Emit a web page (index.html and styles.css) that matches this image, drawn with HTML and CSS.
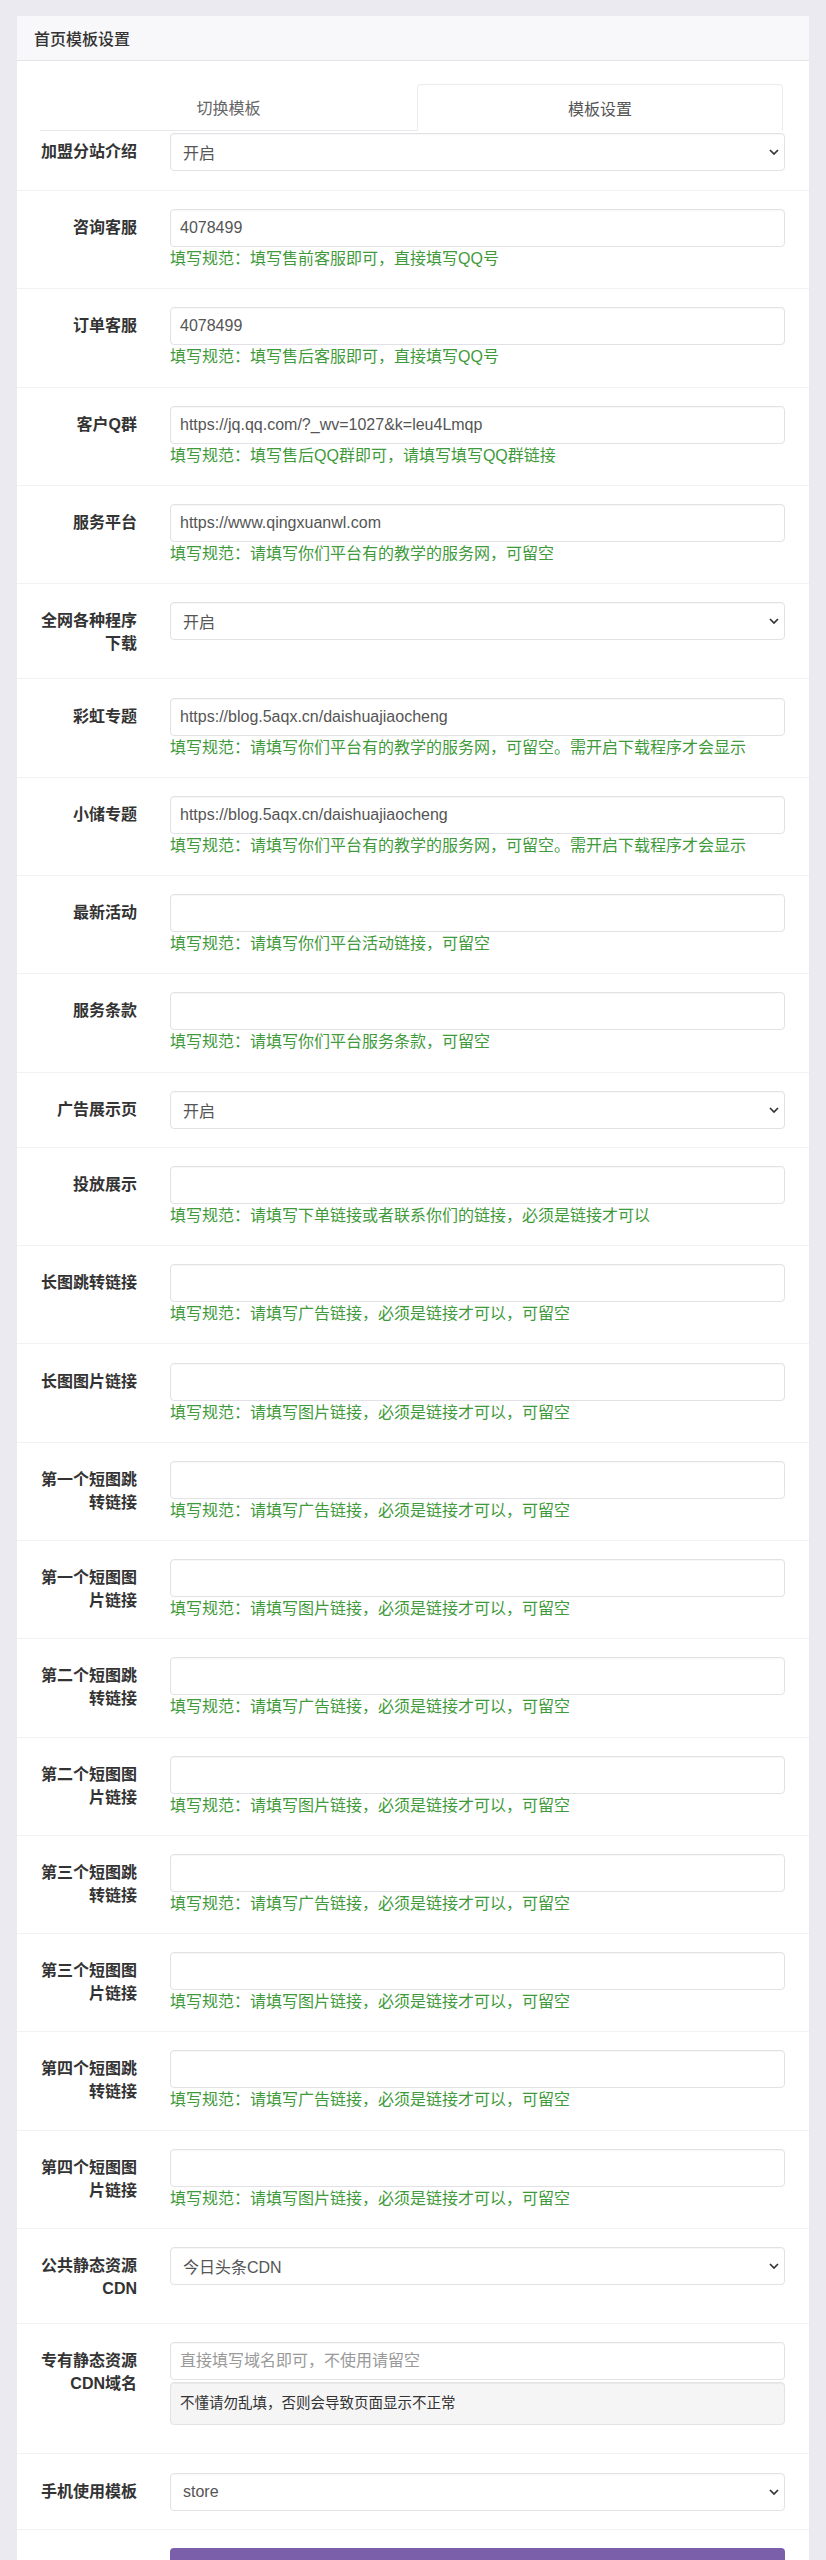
FILE: index.html
```html
<!DOCTYPE html>
<html lang="zh-CN">
<head>
<meta charset="utf-8">
<title>首页模板设置</title>
<link rel="stylesheet" href="styles.css">
</head>
<body>
<div class="page">
  <div class="card">
    <div class="card-head">首页模板设置</div>
    <div class="card-body">
      <div class="tabs">
        <div class="tab">切换模板</div>
        <div class="tab active">模板设置</div>
      </div>

      <div class="row first">
        <label class="lbl">加盟分站介绍</label>
        <div class="field"><div class="sel"><span>开启</span><svg class="chev" width="10" height="6" viewBox="0 0 10 6"><path d="M1 1l4 4 4-4" fill="none" stroke="#333" stroke-width="1.7"/></svg></div></div>
      </div>

      <div class="row">
        <label class="lbl">咨询客服</label>
        <div class="field"><input class="ctl" value="4078499"><div class="help">填写规范：填写售前客服即可，直接填写QQ号</div></div>
      </div>

      <div class="row">
        <label class="lbl">订单客服</label>
        <div class="field"><input class="ctl" value="4078499"><div class="help">填写规范：填写售后客服即可，直接填写QQ号</div></div>
      </div>

      <div class="row">
        <label class="lbl">客户Q群</label>
        <div class="field"><input class="ctl" value="https://jq.qq.com/?_wv=1027&amp;k=leu4Lmqp"><div class="help">填写规范：填写售后QQ群即可，请填写填写QQ群链接</div></div>
      </div>

      <div class="row">
        <label class="lbl">服务平台</label>
        <div class="field"><input class="ctl" value="https://www.qingxuanwl.com"><div class="help">填写规范：请填写你们平台有的教学的服务网，可留空</div></div>
      </div>

      <div class="row">
        <label class="lbl">全网各种程序下载</label>
        <div class="field"><div class="sel"><span>开启</span><svg class="chev" width="10" height="6" viewBox="0 0 10 6"><path d="M1 1l4 4 4-4" fill="none" stroke="#333" stroke-width="1.7"/></svg></div></div>
      </div>

      <div class="row">
        <label class="lbl">彩虹专题</label>
        <div class="field"><input class="ctl" value="https://blog.5aqx.cn/daishuajiaocheng"><div class="help">填写规范：请填写你们平台有的教学的服务网，可留空。需开启下载程序才会显示</div></div>
      </div>

      <div class="row">
        <label class="lbl">小储专题</label>
        <div class="field"><input class="ctl" value="https://blog.5aqx.cn/daishuajiaocheng"><div class="help">填写规范：请填写你们平台有的教学的服务网，可留空。需开启下载程序才会显示</div></div>
      </div>

      <div class="row">
        <label class="lbl">最新活动</label>
        <div class="field"><input class="ctl" value=""><div class="help">填写规范：请填写你们平台活动链接，可留空</div></div>
      </div>

      <div class="row">
        <label class="lbl">服务条款</label>
        <div class="field"><input class="ctl" value=""><div class="help">填写规范：请填写你们平台服务条款，可留空</div></div>
      </div>

      <div class="row">
        <label class="lbl">广告展示页</label>
        <div class="field"><div class="sel"><span>开启</span><svg class="chev" width="10" height="6" viewBox="0 0 10 6"><path d="M1 1l4 4 4-4" fill="none" stroke="#333" stroke-width="1.7"/></svg></div></div>
      </div>

      <div class="row">
        <label class="lbl">投放展示</label>
        <div class="field"><input class="ctl" value=""><div class="help">填写规范：请填写下单链接或者联系你们的链接，必须是链接才可以</div></div>
      </div>

      <div class="row">
        <label class="lbl">长图跳转链接</label>
        <div class="field"><input class="ctl" value=""><div class="help">填写规范：请填写广告链接，必须是链接才可以，可留空</div></div>
      </div>

      <div class="row">
        <label class="lbl">长图图片链接</label>
        <div class="field"><input class="ctl" value=""><div class="help">填写规范：请填写图片链接，必须是链接才可以，可留空</div></div>
      </div>

      <div class="row">
        <label class="lbl">第一个短图跳转链接</label>
        <div class="field"><input class="ctl" value=""><div class="help">填写规范：请填写广告链接，必须是链接才可以，可留空</div></div>
      </div>

      <div class="row">
        <label class="lbl">第一个短图图片链接</label>
        <div class="field"><input class="ctl" value=""><div class="help">填写规范：请填写图片链接，必须是链接才可以，可留空</div></div>
      </div>

      <div class="row">
        <label class="lbl">第二个短图跳转链接</label>
        <div class="field"><input class="ctl" value=""><div class="help">填写规范：请填写广告链接，必须是链接才可以，可留空</div></div>
      </div>

      <div class="row">
        <label class="lbl">第二个短图图片链接</label>
        <div class="field"><input class="ctl" value=""><div class="help">填写规范：请填写图片链接，必须是链接才可以，可留空</div></div>
      </div>

      <div class="row">
        <label class="lbl">第三个短图跳转链接</label>
        <div class="field"><input class="ctl" value=""><div class="help">填写规范：请填写广告链接，必须是链接才可以，可留空</div></div>
      </div>

      <div class="row">
        <label class="lbl">第三个短图图片链接</label>
        <div class="field"><input class="ctl" value=""><div class="help">填写规范：请填写图片链接，必须是链接才可以，可留空</div></div>
      </div>

      <div class="row">
        <label class="lbl">第四个短图跳转链接</label>
        <div class="field"><input class="ctl" value=""><div class="help">填写规范：请填写广告链接，必须是链接才可以，可留空</div></div>
      </div>

      <div class="row">
        <label class="lbl">第四个短图图片链接</label>
        <div class="field"><input class="ctl" value=""><div class="help">填写规范：请填写图片链接，必须是链接才可以，可留空</div></div>
      </div>

      <div class="row">
        <label class="lbl">公共静态资源CDN</label>
        <div class="field"><div class="sel"><span>今日头条CDN</span><svg class="chev" width="10" height="6" viewBox="0 0 10 6"><path d="M1 1l4 4 4-4" fill="none" stroke="#333" stroke-width="1.7"/></svg></div></div>
      </div>

      <div class="row">
        <label class="lbl">专有静态资源CDN域名</label>
        <div class="field"><input class="ctl" value="" placeholder="直接填写域名即可，不使用请留空"><div class="well">不懂请勿乱填，否则会导致页面显示不正常</div></div>
      </div>

      <div class="row">
        <label class="lbl">手机使用模板</label>
        <div class="field"><div class="sel"><span>store</span><svg class="chev" width="10" height="6" viewBox="0 0 10 6"><path d="M1 1l4 4 4-4" fill="none" stroke="#333" stroke-width="1.7"/></svg></div></div>
      </div>

      <div class="row">
        <div></div>
        <div class="field"><button class="btn">修改</button></div>
      </div>
    </div>
  </div>
</div>
</body>
</html>
```
FILE: styles.css
```css
* { box-sizing: border-box; }

body {
  margin: 0;
  background: #eceaf1;
  font-family: "Liberation Sans", "Noto Sans CJK SC", sans-serif;
  font-size: 16px;
  color: #333;
}

.page {
  padding: 16px 17px 60px;
}

.card {
  background: #fff;
}

.card-head {
  height: 45px;
  background: #f8f8fa;
  border-bottom: 1px solid #e3e3e8;
  display: flex;
  align-items: center;
  padding: 0 17px;
  font-weight: 500;
  color: #333;
}

.card-body {
  padding-top: 23px;
}

.tabs {
  display: flex;
  height: 47px;
  margin: 0 24px 2px 23px;
}

.tab {
  flex: 0 0 377px;
  display: flex;
  align-items: center;
  justify-content: center;
  color: #666;
  border-bottom: 1px solid #e8e8ec;
}

.tab.active {
  flex: 0 0 366px;
  color: #555;
  border: 1px solid #ececef;
  border-bottom-color: transparent;
  border-radius: 4px 4px 0 0;
}

.row {
  display: grid;
  grid-template-columns: 97px 1fr;
  column-gap: 33px;
  align-items: start;
  padding: 18.15px 24px 18.15px 23px;
  border-top: 1px solid #f2f2f5;
}

.row.first {
  border-top: none;
  padding-top: 0;
  padding-bottom: 19px;
}

.lbl {
  display: block;
  padding-top: 7px;
  margin-bottom: 5px;
  line-height: 23px;
  text-align: right;
  font-weight: bold;
  color: #333;
}

.field {
  min-width: 0;
}

.ctl,
.sel {
  display: block;
  width: 100%;
  height: 38px;
  border: 1px solid #e2e2e6;
  border-radius: 4px;
  background: #fff;
  box-shadow: inset 0 1px 1px rgba(0, 0, 0, 0.03);
  font: inherit;
  font-size: 16px;
  color: #555;
}

.ctl {
  padding: 0 9px;
  outline: none;
}

.ctl::placeholder {
  color: #9a9a9a;
}

.sel {
  display: flex;
  align-items: center;
  justify-content: space-between;
  padding: 0 5px 0 12px;
}

.chev {
  display: block;
  flex: none;
}

.help {
  line-height: 23px;
  color: #3f9a3c;
  white-space: nowrap;
}

.well {
  margin: 2px 0 10px;
  height: 43px;
  padding: 0 9px;
  background: #f5f5f5;
  border: 1px solid #e3e3e3;
  border-radius: 4px;
  box-shadow: inset 0 1px 1px rgba(0, 0, 0, 0.05);
  font-size: 14.5px;
  line-height: 41px;
  color: #333;
}

.btn {
  display: block;
  width: 100%;
  height: 38px;
  border: none;
  border-radius: 4px;
  background: #7b5fab;
  color: #fff;
  font: inherit;
  font-size: 16px;
}
```
